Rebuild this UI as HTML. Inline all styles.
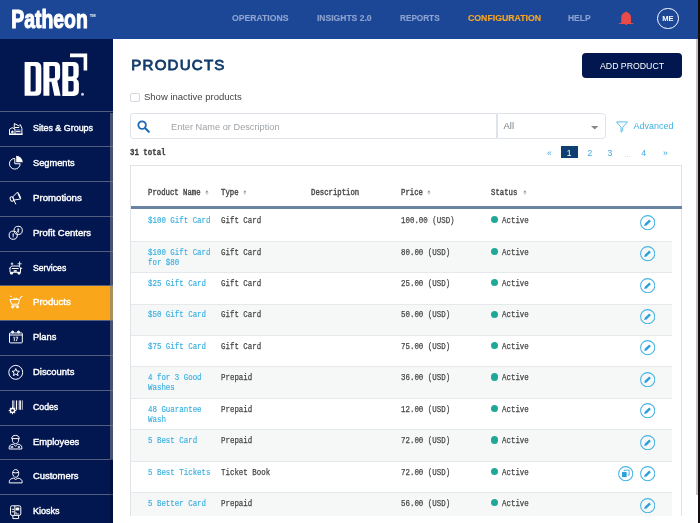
<!DOCTYPE html>
<html><head><meta charset="utf-8">
<style>
*{margin:0;padding:0;box-sizing:border-box}
html,body{width:700px;height:523px;overflow:hidden;background:#fff;font-family:"Liberation Sans",sans-serif}
body{will-change:transform}
.abs{position:absolute}
.t{position:absolute;white-space:nowrap;transform-origin:0 0}
#hdr{position:absolute;left:0;top:0;width:700px;height:39px;background:#1c4796}
.nav{position:absolute;top:13px;font-size:9px;font-weight:bold;color:#8da2cf;white-space:nowrap;line-height:10px;transform-origin:0 0;-webkit-text-stroke:0.15px #8da2cf}
#side{position:absolute;left:0;top:39px;width:113px;height:484px;background:#02164f}
.item{position:absolute;left:0;width:113px;height:34.8px;border-top:1.3px solid #535d7e}
.item span{position:absolute;left:32.8px;top:11px;font-size:9.3px;color:#fff;-webkit-text-stroke:0.4px #fff;white-space:nowrap;line-height:11px;transform-origin:0 0}
.item svg{position:absolute;left:5px;top:7px}
.mono{font-family:"Liberation Mono",monospace}
.th{position:absolute;top:188.1px;font-size:7.3px;color:#4a4a4a;-webkit-text-stroke:0.35px #4a4a4a;white-space:nowrap;line-height:8px;transform:scaleY(1.2);transform-origin:0 0}
.srt{position:absolute;top:189.5px;width:3.8px;height:5.6px}
.row{position:absolute;left:131px;width:541px;height:31.5px;border-bottom:1px solid #e6e9eb}
.row.alt{background:#f6f8f8}
.c{position:absolute;top:4.9px;font-size:7.45px;line-height:8.3px;color:#444;-webkit-text-stroke:0.2px #444;white-space:nowrap;transform:scaleY(1.25);transform-origin:0 0}
.c.n{color:#3cb0e0;-webkit-text-stroke:0.15px #3cb0e0}
.dot{position:absolute;left:360.2px;top:6.1px;width:7.2px;height:7.2px;border-radius:50%;background:#1fa898}
.ed{position:absolute;left:508.8px;top:4.5px;width:15.4px;height:15.4px}
.pg{position:absolute;top:147.5px;font-size:8.5px;color:#3fa9dc;line-height:11px}
</style></head><body>
<div id="hdr">
  <svg class="abs" style="left:0;top:0" width="110" height="39" viewBox="0 0 110 39">
    <text x="11.2" y="27.9" font-family="Liberation Sans" font-weight="bold" font-size="25.5" fill="#fff" stroke="#fff" stroke-width="1.1" stroke-linejoin="round" textLength="76.6" lengthAdjust="spacingAndGlyphs">Patheon</text>
    <text x="89.8" y="17.3" font-family="Liberation Sans" font-weight="bold" font-size="4" fill="#fff" textLength="5.8" lengthAdjust="spacingAndGlyphs">TM</text>
  </svg>
  <div class="nav" style="left:232.4px;transform:scaleX(0.96)">OPERATIONS</div>
  <div class="nav" style="left:316.8px;transform:scaleX(0.948)">INSIGHTS 2.0</div>
  <div class="nav" style="left:399.8px;transform:scaleX(0.91)">REPORTS</div>
  <div class="nav" style="left:467.6px;transform:scaleX(0.97);color:#f6a623;-webkit-text-stroke:0.15px #f6a623">CONFIGURATION</div>
  <div class="nav" style="left:568.4px;transform:scaleX(0.94)">HELP</div>
  <svg class="abs" style="left:612px;top:6px" width="28" height="24" viewBox="0 0 28 24"><path d="M9.3 16.9V11.2A4.85 5 0 0 1 19 11.2V16.9L21.5 17.3V18H6.8V17.3Z" fill="#e94b48"/><circle cx="14.15" cy="6.4" r="0.9" fill="#e94b48"/><path d="M13.2 18H15.1V18.7Q14.15 19.5 13.2 18.7Z" fill="#e94b48"/></svg>
  <div class="abs" style="left:657px;top:7.8px;width:21.5px;height:21.5px;border:1.4px solid #fff;border-radius:50%"></div>
  <div class="abs" style="left:657.2px;top:13.5px;width:21.5px;text-align:center;font-size:7.6px;font-weight:bold;color:#fff;line-height:9px">ME</div>
</div>
<div id="side">
  <svg class="abs" style="left:0;top:-39px" width="113" height="140" viewBox="0 0 113 140" fill="#fff" fill-rule="evenodd">
    <path d="M24.6 61.9H35.8Q41.3 61.9 41.3 67.4V90.2Q41.3 95.7 35.8 95.7H24.6Z M30.6 66.1V91.4H34.2Q35.7 91.4 35.7 89.9V67.6Q35.7 66.1 34.2 66.1Z"/>
    <path d="M43.4 61.9H54.8Q60.1 61.9 60.1 67.2V76Q60.1 79.6 57.2 80.8L60.6 95.7H54.3L51.4 81.8H49.4V95.7H43.4Z M49.4 66.1V78.2H53.6Q55 78.2 55 76.8V67.5Q55 66.1 53.6 66.1Z"/>
    <path d="M62.3 61.9H73.6Q78.7 61.9 78.7 67V74.8Q78.7 77.8 76.4 78.9Q78.9 80 78.9 83.2V90.6Q78.9 95.9 73.6 95.9H62.3Z M68.3 66.1V76.4H72Q73.4 76.4 73.4 75V67.5Q73.4 66.1 72 66.1Z M68.3 81.1V91.4H72.2Q73.6 91.4 73.6 90V82.5Q73.6 81.1 72.2 81.1Z"/>
    <path d="M70 53.6H87.2V70.6H83.6V57.3H70Z"/>
    <circle cx="82.5" cy="94.2" r="1.5" fill="#c8cbd8"/>
  </svg>
</div>
<div id="nav"><div class="item" style="top:111.40px;"><svg width="22" height="20" viewBox="0 0 22 20" fill="none" stroke="#fff" stroke-width="1"><g transform="translate(0 0.9)"><path d="M4 14.3H17.6" stroke-width="1.6"/><path d="M4.5 14V9.4L7.2 7.8L10 9.1V14M9.3 8.8V3.6L14.4 6.3M14.2 5.6L15.2 4.6L16.9 8.3V14M10 7.6H14.2M11 11.8H15.6"/><rect x="11.2" y="9.3" width="4.2" height="2.5" fill="#fff" fill-opacity="0.35" stroke="none"/><circle cx="7.4" cy="12" r="0.9" fill="#fff"/></g></svg><span style="transform:scaleX(0.96)">Sites &amp; Groups</span></div>
<div class="item" style="top:146.20px;"><svg width="22" height="20" viewBox="0 0 22 20" fill="none" stroke="#fff" stroke-width="1"><path d="M9.8 4.4A5.35 5.35 0 1 0 15.15 9.75H9.8Z"/><path d="M11.2 8.3V1.8A6.5 6.5 0 0 1 17.7 8.3Z" fill="#fff" stroke="none"/></svg><span style="transform:scaleX(0.996)">Segments</span></div>
<div class="item" style="top:181.00px;"><svg width="22" height="20" viewBox="0 0 22 20" fill="none" stroke="#fff" stroke-width="1" stroke-linejoin="round"><path d="M7.6 8L12.6 3L15.8 9.9L8.9 11.1Z"/><ellipse cx="6.9" cy="10" rx="1.6" ry="2.3" transform="rotate(-25 6.9 10)"/><path d="M8.9 11.1L10.8 15.3"/><path d="M13.2 4.5L15.4 8.8" stroke-width="1.6"/></svg><span style="transform:scaleX(1.038)">Promotions</span></div>
<div class="item" style="top:215.80px;"><svg width="22" height="20" viewBox="0 0 22 20" fill="none" stroke="#fff" stroke-width="1"><circle cx="13.2" cy="6.4" r="4.1"/><circle cx="8.2" cy="11.2" r="4.1"/><path d="M13.2 4.3V8.6M12.3 5.4Q13.2 4.6 14 5.4Q14 6.3 13.2 6.5Q12.4 6.7 12.4 7.5Q13.2 8.3 14.1 7.5M8.2 9.3V13.4M7.5 10.8Q8.2 10 8.8 10.8" stroke-width="0.8"/></svg><span style="transform:scaleX(1.022)">Profit Centers</span></div>
<div class="item" style="top:250.60px;"><svg width="22" height="20" viewBox="0 0 22 20" fill="none" stroke="#fff" stroke-width="1"><path d="M5 11V9L6.5 7H14L15.5 9V13.3H5Z"/><path d="M6.8 9.5H13.7M4.2 9.3H5M15.5 9.3H17.2M8.5 12H12"/><path d="M5.6 13.2V15H7.6V13.2M13 13.2V15H15V13.2" fill="#fff"/><path d="M7 3.5V6M5.8 4.8H8.2M14.6 2.5V7M12.6 4.8H16.6" stroke-width="0.9"/><rect x="9" y="11.3" width="2.5" height="1.2" fill="#fff" stroke="none"/></svg><span style="transform:scaleX(0.932)">Services</span></div>
<div class="item" style="top:285.40px;background:#f9a61b;"><svg width="22" height="20" viewBox="0 0 22 20" fill="none" stroke="#fff" stroke-width="1" stroke-linejoin="round"><path d="M5 3.4Q5.5 2.2 6.6 4.1M5 6.5H14.6L13.3 11.2H6.6Z"/><path d="M14.6 6.5L16 3.6H17.4M8 6.3Q9.3 4.2 10.8 5.8Q12 4.3 13 6.2M6.6 13H13.5"/><circle cx="7.6" cy="14" r="1" fill="#fff"/><circle cx="12.5" cy="14" r="1" fill="#fff"/></svg><span style="transform:scaleX(1.031)">Products</span></div>
<div class="item" style="top:320.20px;"><svg width="22" height="20" viewBox="0 0 22 20" fill="none" stroke="#fff" stroke-width="1"><rect x="4.5" y="4.9" width="12.8" height="10" rx="0.8"/><path d="M4.5 7H17.3"/><circle cx="7.6" cy="4" r="1" fill="#fff"/><circle cx="13.5" cy="4" r="1" fill="#fff"/><path d="M8.4 9.2H9.3V13.1M10.6 9.2H12.8L11.2 13.1" stroke-width="0.9"/></svg><span style="transform:scaleX(1.003)">Plans</span></div>
<div class="item" style="top:355.00px;"><svg width="22" height="20" viewBox="0 0 22 20" fill="none" stroke="#fff" stroke-width="1"><circle cx="10.75" cy="9.35" r="6.95"/><path d="M10.75 5.6L11.8 8.1L14.4 8.3L12.4 10L13.1 12.6L10.75 11.2L8.4 12.6L9.1 10L7.1 8.3L9.7 8.1Z" stroke-linejoin="round"/></svg><span style="transform:scaleX(1.013)">Discounts</span></div>
<div class="item" style="top:389.80px;"><svg width="22" height="20" viewBox="0 0 22 20" fill="#fff"><rect x="7" y="2.4" width="1.8" height="8" fill="#b8bdd0"/><rect x="9.4" y="2.4" width="0.8" height="9.4" fill="#8a92b0"/><rect x="11" y="2.4" width="1" height="9.4"/><rect x="12.8" y="2.4" width="0.7" height="9.4" fill="#8a92b0"/><rect x="14.3" y="2.4" width="1.6" height="9.4"/><rect x="16.8" y="2.4" width="1" height="9.4" fill="#c0c4d4"/><path d="M6.82 8.76L8.18 8.76L7.94 9.74L9.14 10.23L9.66 9.38L10.62 10.34L9.77 10.86L10.26 12.06L11.24 11.82L11.24 13.18L10.26 12.94L9.77 14.14L10.62 14.66L9.66 15.62L9.14 14.77L7.94 15.26L8.18 16.24L6.82 16.24L7.06 15.26L5.86 14.77L5.34 15.62L4.38 14.66L5.23 14.14L4.74 12.94L3.76 13.18L3.76 11.82L4.74 12.06L5.23 10.86L4.38 10.34L5.34 9.38L5.86 10.23L7.06 9.74Z"/><circle cx="7.5" cy="12.5" r="1.35" fill="#02164f"/></svg><span style="transform:scaleX(0.939)">Codes</span></div>
<div class="item" style="top:424.60px;"><svg width="22" height="20" viewBox="0 0 22 20" fill="none" stroke="#fff" stroke-width="1"><path d="M6.8 5.6C6.8 3.3 8.4 2.4 10.5 2.4S14.2 3.3 14.2 5.6M6.6 5.6H14.4M7.4 6V7.2C7.4 9.2 8.8 10.6 10.5 10.6S13.6 9.2 13.6 7.2V6M4.2 16V14.2C4.2 12.6 5.8 11.5 8.2 11.1L10.5 13L12.8 11.1C15.2 11.5 16.8 12.6 16.8 14.2V16Z"/><path d="M5.6 14H8.2M12.8 14H15" stroke-width="1.4"/></svg><span style="transform:scaleX(1.006)">Employees</span></div>
<div class="item" style="top:459.40px;"><svg width="22" height="20" viewBox="0 0 22 20" fill="none" stroke="#fff" stroke-width="1"><path d="M10.7 2.6C8.9 2.6 7.7 4 7.7 6.2C7.7 8.6 9 10.3 10.7 10.3S13.7 8.6 13.7 6.2C13.7 4 12.5 2.6 10.7 2.6ZM7.8 5.4Q10.7 6.4 13.6 5.4M4.3 15.9V14.4C4.3 12.7 6.2 11.4 8.6 11.1L10.7 12.5L12.8 11.1C15.2 11.4 17.1 12.7 17.1 14.4V15.9Z"/></svg><span style="transform:scaleX(1.012)">Customers</span></div>
<div class="item" style="top:494.20px;"><svg width="22" height="20" viewBox="0 0 22 20" fill="none" stroke="#fff" stroke-width="1"><g transform="translate(0 0.8)"><rect x="5.5" y="3" width="10.3" height="9.6" rx="1.6"/><path d="M7.9 13V15.8H13.6V13M9.8 3.2V12.4M6.8 6.5H9M6.8 9H9"/><rect x="10.6" y="4.8" width="3.7" height="2.8" fill="#fff" stroke="none"/><path d="M11 9.2V11.2H14.2" stroke-width="0.8"/></g></svg><span style="transform:scaleX(0.972)">Kiosks</span></div></div>
<div class="abs" style="left:110px;top:112.5px;width:3px;height:411px;background:rgba(0,0,20,0.25)"></div>
<div class="abs" style="left:110px;top:112.5px;width:3px;height:346px;background:rgba(160,165,175,0.45)"></div>
<!-- main -->
<div class="t" style="left:131.3px;top:55.8px;font-size:15.1px;color:#113b6a;line-height:18px;letter-spacing:1.2px;-webkit-text-stroke:0.8px #113b6a">PRODUCTS</div>
<div class="abs" style="left:582.2px;top:52.7px;width:99.4px;height:25.4px;background:#02164f;border-radius:4px"></div>
<div class="t" style="left:600px;top:61px;font-size:9px;color:#fff;line-height:10px;transform:scaleX(0.97)">ADD PRODUCT</div>
<div class="abs" style="left:130px;top:92.7px;width:10px;height:9.6px;border:1px solid #d5d9de;border-radius:2px"></div>
<div class="t" style="left:144px;top:91px;font-size:9.5px;color:#444;line-height:11px">Show inactive products</div>
<div class="abs" style="left:130px;top:113.4px;width:366.5px;height:26px;border:1px solid #dfe4ea;border-radius:3px 0 0 3px"></div>
<svg class="abs" style="left:137px;top:119.5px" width="14" height="14" viewBox="0 0 14 14"><circle cx="5.1" cy="5.1" r="3.8" fill="none" stroke="#1d6bb5" stroke-width="1.8"/><path d="M8 8L11.8 11.8" stroke="#1d6bb5" stroke-width="2.1" stroke-linecap="round"/></svg>
<div class="t" style="left:171px;top:120.7px;font-size:9.5px;color:#a0a4a8;line-height:11px;transform:scaleX(0.97)">Enter Name or Description</div>
<div class="abs" style="left:496.5px;top:113.4px;width:109px;height:26px;border:1px solid #dfe4ea;border-radius:0 4px 4px 0"></div>
<div class="t" style="left:503.5px;top:120.2px;font-size:9.5px;color:#7a7e82;line-height:11px">All</div>
<svg class="abs" style="left:591px;top:125.5px" width="8" height="4" viewBox="0 0 8 4"><path d="M0 0H7.4L3.7 3.4z" fill="#888"/></svg>
<svg class="abs" style="left:615.5px;top:120.5px" width="12" height="12" viewBox="0 0 12 12"><path d="M0.6 0.9H11.4L6.7 6.3V9.8L5.1 11.1V6.3z" fill="none" stroke="#3fb1e3" stroke-width="0.85" stroke-linejoin="round"/></svg>
<div class="t" style="left:633.5px;top:121.2px;font-size:9px;color:#3fb1e3;line-height:11px">Advanced</div>
<div class="t mono" style="left:130px;top:148px;font-size:7.8px;font-weight:bold;color:#3a3a3a;-webkit-text-stroke:0.25px #3a3a3a;line-height:8px;transform:scale(0.95,1.2)">31 total</div>
<div class="pg" style="left:547px">«</div>
<div class="abs" style="left:561px;top:146.4px;width:16.6px;height:12px;background:#0f3f70"></div>
<div class="pg" style="left:566.8px;color:#fff">1</div>
<div class="pg" style="left:587.5px">2</div>
<div class="pg" style="left:607.5px">3</div>
<div class="pg" style="left:624.8px;font-size:5.5px;top:149.5px">…</div>
<div class="pg" style="left:641.3px">4</div>
<div class="pg" style="left:663px">»</div>
<!-- table card -->
<div class="abs" style="left:130px;top:165px;width:552px;height:351.5px;border:1px solid #e0e4e9;border-bottom:none"></div>
<div class="abs" style="left:131px;top:206.1px;width:551px;height:3px;background:#6a83a3"></div>
<div class="th mono" style="left:148px">Product Name</div><svg class="srt" style="left:205.3px" viewBox="0 0 4 6"><path d="M0.3 2.6L2 0.4L3.7 2.6z" fill="#7f8a9c"/><path d="M0.3 3.4L2 5.6L3.7 3.4z" fill="#cfd4dc"/></svg>
<div class="th mono" style="left:221px">Type</div><svg class="srt" style="left:242.6px" viewBox="0 0 4 6"><path d="M0.3 2.6L2 0.4L3.7 2.6z" fill="#7f8a9c"/><path d="M0.3 3.4L2 5.6L3.7 3.4z" fill="#cfd4dc"/></svg>
<div class="th mono" style="left:311px">Description</div>
<div class="th mono" style="left:401px">Price</div><svg class="srt" style="left:427.3px" viewBox="0 0 4 6"><path d="M0.3 2.6L2 0.4L3.7 2.6z" fill="#7f8a9c"/><path d="M0.3 3.4L2 5.6L3.7 3.4z" fill="#cfd4dc"/></svg>
<div class="th mono" style="left:491px">Status</div><svg class="srt" style="left:522.9px" viewBox="0 0 4 6"><path d="M0.3 2.6L2 0.4L3.7 2.6z" fill="#7f8a9c"/><path d="M0.3 3.4L2 5.6L3.7 3.4z" fill="#cfd4dc"/></svg>
<div id="rows"><div class="row mono" style="top:210.20px;height:31.44px"><div class="c n" style="left:17px">$100 Gift Card</div><div class="c" style="left:90px">Gift Card</div><div class="c" style="left:270px">100.00 (USD)</div><div class="dot"></div><div class="c" style="left:371px">Active</div><svg class="ed" viewBox="0 0 16 16"><circle cx="8" cy="8" r="7.35" fill="none" stroke="#45b3e3" stroke-width="1.05"/><path d="M4.3 11.4L5 9L9.6 4.7L11.3 6.4L6.8 10.8z" fill="#2a9fd8"/></svg></div>
<div class="row alt mono" style="top:241.64px;height:31.44px"><div class="c n" style="left:17px">$100 Gift Card<br>for $80</div><div class="c" style="left:90px">Gift Card</div><div class="c" style="left:270px">80.00 (USD)</div><div class="dot"></div><div class="c" style="left:371px">Active</div><svg class="ed" viewBox="0 0 16 16"><circle cx="8" cy="8" r="7.35" fill="none" stroke="#45b3e3" stroke-width="1.05"/><path d="M4.3 11.4L5 9L9.6 4.7L11.3 6.4L6.8 10.8z" fill="#2a9fd8"/></svg></div>
<div class="row mono" style="top:273.08px;height:31.44px"><div class="c n" style="left:17px">$25 Gift Card</div><div class="c" style="left:90px">Gift Card</div><div class="c" style="left:270px">25.00 (USD)</div><div class="dot"></div><div class="c" style="left:371px">Active</div><svg class="ed" viewBox="0 0 16 16"><circle cx="8" cy="8" r="7.35" fill="none" stroke="#45b3e3" stroke-width="1.05"/><path d="M4.3 11.4L5 9L9.6 4.7L11.3 6.4L6.8 10.8z" fill="#2a9fd8"/></svg></div>
<div class="row alt mono" style="top:304.52px;height:31.44px"><div class="c n" style="left:17px">$50 Gift Card</div><div class="c" style="left:90px">Gift Card</div><div class="c" style="left:270px">50.00 (USD)</div><div class="dot"></div><div class="c" style="left:371px">Active</div><svg class="ed" viewBox="0 0 16 16"><circle cx="8" cy="8" r="7.35" fill="none" stroke="#45b3e3" stroke-width="1.05"/><path d="M4.3 11.4L5 9L9.6 4.7L11.3 6.4L6.8 10.8z" fill="#2a9fd8"/></svg></div>
<div class="row mono" style="top:335.96px;height:31.44px"><div class="c n" style="left:17px">$75 Gift Card</div><div class="c" style="left:90px">Gift Card</div><div class="c" style="left:270px">75.00 (USD)</div><div class="dot"></div><div class="c" style="left:371px">Active</div><svg class="ed" viewBox="0 0 16 16"><circle cx="8" cy="8" r="7.35" fill="none" stroke="#45b3e3" stroke-width="1.05"/><path d="M4.3 11.4L5 9L9.6 4.7L11.3 6.4L6.8 10.8z" fill="#2a9fd8"/></svg></div>
<div class="row alt mono" style="top:367.40px;height:31.44px"><div class="c n" style="left:17px">4 for 3 Good<br>Washes</div><div class="c" style="left:90px">Prepaid</div><div class="c" style="left:270px">36.00 (USD)</div><div class="dot"></div><div class="c" style="left:371px">Active</div><svg class="ed" viewBox="0 0 16 16"><circle cx="8" cy="8" r="7.35" fill="none" stroke="#45b3e3" stroke-width="1.05"/><path d="M4.3 11.4L5 9L9.6 4.7L11.3 6.4L6.8 10.8z" fill="#2a9fd8"/></svg></div>
<div class="row mono" style="top:398.84px;height:31.44px"><div class="c n" style="left:17px">48 Guarantee<br>Wash</div><div class="c" style="left:90px">Prepaid</div><div class="c" style="left:270px">12.00 (USD)</div><div class="dot"></div><div class="c" style="left:371px">Active</div><svg class="ed" viewBox="0 0 16 16"><circle cx="8" cy="8" r="7.35" fill="none" stroke="#45b3e3" stroke-width="1.05"/><path d="M4.3 11.4L5 9L9.6 4.7L11.3 6.4L6.8 10.8z" fill="#2a9fd8"/></svg></div>
<div class="row alt mono" style="top:430.28px;height:31.44px"><div class="c n" style="left:17px">5 Best Card</div><div class="c" style="left:90px">Prepaid</div><div class="c" style="left:270px">72.00 (USD)</div><div class="dot"></div><div class="c" style="left:371px">Active</div><svg class="ed" viewBox="0 0 16 16"><circle cx="8" cy="8" r="7.35" fill="none" stroke="#45b3e3" stroke-width="1.05"/><path d="M4.3 11.4L5 9L9.6 4.7L11.3 6.4L6.8 10.8z" fill="#2a9fd8"/></svg></div>
<div class="row mono" style="top:461.72px;height:31.44px"><div class="c n" style="left:17px">5 Best Tickets</div><div class="c" style="left:90px">Ticket Book</div><div class="c" style="left:270px">72.00 (USD)</div><div class="dot"></div><div class="c" style="left:371px">Active</div><svg class="ed" style="left:486.5px" viewBox="0 0 16 16"><circle cx="8" cy="8" r="7.35" fill="none" stroke="#45b3e3" stroke-width="1.05"/><rect x="4.2" y="6.3" width="4.8" height="5.2" fill="#2a9fd8"/><path d="M6.4 5.5V4.3H11.6V9.5H10" fill="none" stroke="#2a9fd8" stroke-width="0.8"/></svg><svg class="ed" viewBox="0 0 16 16"><circle cx="8" cy="8" r="7.35" fill="none" stroke="#45b3e3" stroke-width="1.05"/><path d="M4.3 11.4L5 9L9.6 4.7L11.3 6.4L6.8 10.8z" fill="#2a9fd8"/></svg></div>
<div class="row alt mono" style="top:493.16px;height:31.44px"><div class="c n" style="left:17px">5 Better Card</div><div class="c" style="left:90px">Prepaid</div><div class="c" style="left:270px">56.00 (USD)</div><div class="dot"></div><div class="c" style="left:371px">Active</div><svg class="ed" viewBox="0 0 16 16"><circle cx="8" cy="8" r="7.35" fill="none" stroke="#45b3e3" stroke-width="1.05"/><path d="M4.3 11.4L5 9L9.6 4.7L11.3 6.4L6.8 10.8z" fill="#2a9fd8"/></svg></div></div>
<!-- main scrollbar -->
<div class="abs" style="left:113px;top:516px;width:583px;height:7px;background:#fff"></div>
<div class="abs" style="left:696px;top:39px;width:2.3px;height:456px;background:#c4c4c4"></div>
<div class="abs" style="left:698px;top:0;width:2px;height:523px;background:#140c0c"></div>
</body></html>
